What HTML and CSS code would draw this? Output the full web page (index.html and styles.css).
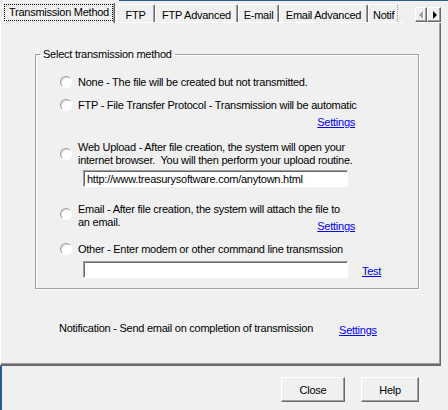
FILE: index.html
```html
<!DOCTYPE html>
<html>
<head>
    <link rel="stylesheet" href="styles.css">
</head>
<body>
    <div class="window">
        <!-- tab strip -->
        <div class="tabbar">
            <div class="tabs">
                <div class="tab active"><span class="focus">Transmission Method</span></div>
                <div class="tab tab-ftp">FTP</div>
                <div class="tab tab-ftpadv">FTP Advanced</div>
                <div class="tab tab-email">E-mail</div>
                <div class="tab tab-emailadv">Email Advanced</div>
                <div class="tab tab-notif">Notif</div>
            </div>
            <div class="scroller">
                <div class="arrow-btn left"><span class="tri-left"></span></div>
                <div class="arrow-btn right"><span class="tri-right"></span></div>
            </div>
        </div>

        <div class="panel">
            <fieldset class="group">
                <legend>Select transmission method</legend>

                <div class="row row-none">
                    <span class="radio"></span>
                    <span class="label">None - The file will be created but not transmitted.</span>
                </div>

                <div class="row row-ftp">
                    <span class="radio"></span>
                    <span class="label">FTP - File Transfer Protocol - Transmission will be automatic</span>
                </div>
                <div class="link-line"><a href="#">Settings</a></div>

                <div class="row row-web">
                    <span class="radio radio-web"></span>
                    <span class="label">Web Upload - After file creation, the system will open your<br>internet browser.&nbsp; You will then perform your upload routine.</span>
                </div>
                <div class="field-line">
                    <input class="textbox" type="text" value="http://www.treasurysoftware.com/anytown.html">
                </div>

                <div class="row row-email">
                    <span class="radio radio-email"></span>
                    <span class="label">Email - After file creation, the system will attach the file to<br>an email.</span>
                </div>
                <div class="link-line link-email"><a href="#">Settings</a></div>

                <div class="row row-other">
                    <span class="radio"></span>
                    <span class="label">Other - Enter modem or other command line transmssion</span>
                </div>
                <div class="field-line field-other">
                    <input class="textbox" type="text" value="">
                    <a href="#" class="test-link">Test</a>
                </div>
            </fieldset>

            <div class="notify">
                <span>Notification - Send email on completion of transmission</span>
                <a href="#">Settings</a>
            </div>
        </div>

        <div class="footer">
            <button class="btn btn-close">Close</button>
            <button class="btn btn-help">Help</button>
        </div>
    </div>
</body>
</html>
```

FILE: styles.css
```css
body {
    margin: 0;
    background: #f0f0f0;
    font-family: "Liberation Sans", Arial, sans-serif;
    font-size: 11px;
    line-height: 13px;
    letter-spacing: -0.25px;
    color: #000;
}

.window {
    width: 448px;
    height: 410px;
    overflow: hidden;
    background: #f0f0f0;
}

/* tab strip */
.tabbar {
    width: 448px;
    height: 23px;
    box-sizing: border-box;
    /* blue window edge behind the strip, starts after the active tab */
    background: linear-gradient(#2b5a93, #2b5a93) no-repeat 119px 0 / 329px 1px;
    padding-top: 1px;
    display: flex;
    align-items: flex-end;
}
.tabs {
    flex: none;
    width: 404px;
    height: 22px;
    box-sizing: border-box;
    border-bottom: 1px solid #fff;
    display: flex;
    align-items: flex-end;
}
.tab {
    flex: none;
    height: 18px;
    box-sizing: border-box;
    padding: 4px 0 0;
    text-align: center;
    border-top: 1px solid #fff;
    border-left: 1px solid #fff;
    border-right: 1px solid #696969;
    box-shadow: inset -1px 0 0 #a0a0a0;
    border-radius: 2px 2px 0 0;
    white-space: nowrap;
    overflow: hidden;
}
.tab.active {
    height: 21px;
    margin: 0 1px -1px 2px;
    padding: 1px 1px 0 1px;
    background: #f0f0f0;
}
.tab .focus {
    display: block;
    border: 1px dotted #000;
    padding: 1px 3px 1px 4px;
}
.tab-ftp { width: 39px; }
.tab-ftpadv { width: 83px; }
.tab-email { width: 41px; }
.tab-emailadv { width: 89px; }
.tab-notif {
    width: 30px;
    text-align: left;
    padding-left: 4px;
    border-right: 1px dotted #a0a0a0;
    box-shadow: none;
    border-radius: 2px 0 0 0;
}

.scroller {
    flex: none;
    display: flex;
    margin-left: 11px;
    height: 22px;
    box-sizing: border-box;
    border-bottom: 1px solid #fff;
    align-items: flex-end;
    width: 26px;
}
.arrow-btn {
    height: 15px;
    box-sizing: border-box;
    border: 1px solid;
    border-color: #fff #696969 #696969 #fff;
    box-shadow: inset -1px -1px 0 #a0a0a0;
    display: flex;
    align-items: center;
    justify-content: center;
    background: #f0f0f0;
}
.arrow-btn.left { width: 12px; }
.arrow-btn.right { width: 14px; }
.tri-left {
    width: 0;
    height: 0;
    border-top: 4px solid transparent;
    border-bottom: 4px solid transparent;
    border-right: 4px solid #a0a0a0;
    filter: drop-shadow(1px 1px 0 #fff);
}
.tri-right {
    width: 0;
    height: 0;
    border-top: 4px solid transparent;
    border-bottom: 4px solid transparent;
    border-left: 4px solid #000;
    margin-left: 1px;
}

/* main panel */
.panel {
    width: 441px;
    height: 343px;
    box-sizing: border-box;
    border-left: 1px solid #fff;
    border-right: 1px solid #696969;
    border-bottom: 2px solid #696969;
    box-shadow: inset -1px -1px 0 #a0a0a0;
    padding-top: 25px;
}

.group {
    margin: 0 0 0 34px;
    width: 384px;
    box-sizing: border-box;
    padding: 0 0 10px 0;
    border: 1px solid #a0a0a0;
    box-shadow: 1px 1px 0 #fff, inset 1px 1px 0 #fff;
    min-width: 0;
}
.group legend {
    margin-left: 4px;
    padding: 0 3px;
    line-height: 13px;
}

.row {
    display: flex;
    align-items: flex-start;
    padding-left: 24px;
}
.row-none { margin-top: 15px; }
.row-ftp { margin-top: 10px; }
.row-web { margin-top: 12px; }
.row-email { margin-top: 16px; }
.row-other { margin-top: 10px; }

.radio {
    flex: none;
    width: 12px;
    height: 12px;
    box-sizing: border-box;
    border-radius: 50%;
    border: 1px solid;
    border-color: #a0a0a0 #fff #fff #a0a0a0;
    box-shadow: inset 1px 1px 0 #dcdcdc;
    background: #fff;
    margin: 0 6px 0 0;
}
.radio-web { margin-top: 7px; }
.radio-email { margin-top: 5px; }

.label {
    white-space: nowrap;
}

.link-line {
    text-align: right;
    padding-right: 63px;
    margin-top: 4px;
}
.link-email {
    margin-top: -9px;
}

a {
    color: #0000ff;
    text-decoration: underline;
}

.field-line {
    padding-left: 47px;
    margin-top: 3px;
    display: flex;
    align-items: center;
}
.field-other {
    margin-top: 5px;
}
.textbox {
    width: 265px;
    height: 17px;
    box-sizing: border-box;
    margin: 0;
    padding: 0 3px;
    border: 1px solid;
    border-color: #a0a0a0 #fff #fff #a0a0a0;
    box-shadow: inset 1px 1px 0 #696969;
    background: #fff;
    font-family: inherit;
    font-size: 11px;
    letter-spacing: -0.25px;
    color: #000;
    outline: none;
}
.test-link {
    margin-left: 14px;
    margin-top: 3px;
}

.notify {
    display: flex;
    align-items: flex-start;
    padding-left: 58px;
    margin-top: 33px;
}
.notify a {
    margin-left: 26px;
    margin-top: 2px;
}

/* bottom buttons */
.footer {
    height: 44px;
    border-left: 2px solid #2b5a93;
    display: flex;
    justify-content: flex-end;
    align-items: flex-start;
    padding: 11px 29px 0 0;
}
.btn {
    height: 25px;
    box-sizing: border-box;
    margin: 0 0 0 16px;
    padding: 0;
    border: 1px solid;
    border-color: #fff #696969 #696969 #fff;
    box-shadow: inset -1px -1px 0 #a0a0a0;
    background: #f0f0f0;
    font-family: inherit;
    font-size: 11px;
    letter-spacing: -0.25px;
    color: #000;
}
.btn-close { width: 64px; }
.btn-help { width: 58px; }
```
